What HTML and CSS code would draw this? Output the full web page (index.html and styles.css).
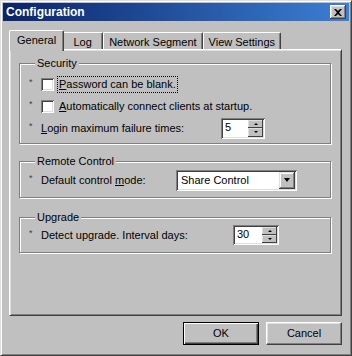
FILE: index.html
```html
<!DOCTYPE html>
<html lang="en">
<head>
<meta charset="UTF-8">
<title>Configuration</title>
<link rel="stylesheet" href="styles.css">
</head>
<body>

<div class="window">
    <div class="titlebar">
        <span class="title">Configuration</span>
        <span class="close-btn">
            <svg width="8" height="7" viewBox="0 0 8 7"><path d="M0 0h2l2 2 2-2h2L5 3.5 8 7H6L4 5 2 7H0l3-3.5z" fill="#000"/></svg>
        </span>
    </div>

    <div class="content">
        <div class="tabs">
            <div class="tab active">General</div>
            <div class="tab tab-log">Log</div>
            <div class="tab">Network Segment</div>
            <div class="tab">View Settings</div>
        </div>

        <div class="panel">
            <div class="group security">
                <div class="group-title">Security</div>
                <div class="row">
                    <span class="star">*</span>
                    <span class="checkbox"></span>
                    <span class="check-label focused"><u>P</u>assword can be blank.</span>
                </div>
                <div class="row">
                    <span class="star">*</span>
                    <span class="checkbox"></span>
                    <span class="check-label"><u>A</u>utomatically connect clients at startup.</span>
                </div>
                <div class="row">
                    <span class="star">*</span>
                    <span class="label label-login"><u>L</u>ogin maximum failure times:</span>
                    <div class="spin spin-login">
                        <span class="spin-value">5</span>
                        <span class="spin-buttons">
                            <span class="spin-btn"><i class="arrow-up"></i></span>
                            <span class="spin-btn"><i class="arrow-down"></i></span>
                        </span>
                    </div>
                </div>
            </div>

            <div class="group remote">
                <div class="group-title">Remote Control</div>
                <div class="row">
                    <span class="star">*</span>
                    <span class="label label-mode">Default control <u>m</u>ode:</span>
                    <div class="combo">
                        <span class="combo-value">Share Control</span>
                        <span class="combo-btn"><i class="arrow-big"></i></span>
                    </div>
                </div>
            </div>

            <div class="group upgrade">
                <div class="group-title">Upgrade</div>
                <div class="row">
                    <span class="star">*</span>
                    <span class="label label-days">Detect upgrade. Interval days:</span>
                    <div class="spin spin-days">
                        <span class="spin-value">30</span>
                        <span class="spin-buttons">
                            <span class="spin-btn"><i class="arrow-up"></i></span>
                            <span class="spin-btn"><i class="arrow-down"></i></span>
                        </span>
                    </div>
                </div>
            </div>
        </div>

        <div class="buttons">
            <div class="btn default">OK</div>
            <div class="btn">Cancel</div>
        </div>
    </div>
</div>

</body>
</html>
```

FILE: styles.css
```css
/* Classic grey dialog */
* {
    box-sizing: border-box;
}
body {
    margin: 0;
    background: #c0c0c0;
    font-family: "Liberation Sans", Arial, sans-serif;
    font-size: 11px;
    line-height: 13px;
    color: #000;
}
.window {
    width: 352px;
    height: 356px;
    display: flex;
    flex-direction: column;
    padding: 2px;
    background: #c0c0c0;
    border: 1px solid;
    border-color: #dfdfdf #404040 #404040 #dfdfdf;
    box-shadow: inset 1px 1px 0 #fff, inset -1px -1px 0 #808080;
}

/* title bar */
.titlebar {
    height: 18px;
    display: flex;
    align-items: center;
    justify-content: space-between;
    padding: 0 3px 0 3px;
    background: linear-gradient(to right, #0a246a, #3c7fd4);
}
.title {
    color: #fff;
    font-weight: bold;
    font-size: 12px;
}
.close-btn {
    width: 16px;
    height: 14px;
    display: flex;
    align-items: center;
    justify-content: center;
    background: #c0c0c0;
    box-shadow: inset -1px -1px 0 #404040, inset 1px 1px 0 #fff,
                inset -2px -2px 0 #808080, inset 2px 2px 0 #dfdfdf;
}

.content {
    flex: 1;
    display: flex;
    flex-direction: column;
    padding: 9px 7px 8px 6px;
}

/* tabs */
.tabs {
    display: flex;
    align-items: flex-start;
    padding-left: 2px;
    height: 19px;
}
.tab {
    margin-top: 2px;
    height: 17px;
    padding: 3px 5px 0 5px;
    min-width: 41px;
    text-align: center;
    border-top: 1px solid #fff;
    border-left: 1px solid #fff;
    border-right: 1px solid #404040;
    border-radius: 2px 2px 0 0;
    box-shadow: inset -1px 0 0 #808080;
    white-space: nowrap;
}
.tab.active {
    position: relative;
    z-index: 1;
    margin: 0 -2px;
    height: 21px;
    padding: 3px 7px 0 7px;
    background: #c0c0c0;
}

.panel {
    flex: 1;
    padding: 13px 10px 0 9px;
    border: 1px solid;
    border-color: #fff #404040 #404040 #fff;
    box-shadow: inset 1px 1px 0 #dfdfdf, inset -1px -1px 0 #808080;
}

/* group boxes */
.group {
    border: 1px solid #808080;
    box-shadow: inset 1px 1px 0 #fff, 1px 1px 0 #fff;
    padding: 0 8px 6px 9px;
}
.group-title {
    width: fit-content;
    margin: -7px 0 0 6px;
    padding: 0 2px;
    background: #c0c0c0;
}
.security {
    padding-bottom: 4px;
}
.security .group-title {
    margin-bottom: 3px;
}
.remote {
    margin-top: 17px;
}
.remote .group-title {
    margin-bottom: 1px;
}
.upgrade {
    margin-top: 19px;
}

.row {
    height: 22px;
    display: flex;
    align-items: center;
}
.star {
    width: 12px;
    font-size: 9px;
    color: #404040;
    margin-top: -3px;
}
.checkbox {
    width: 13px;
    height: 13px;
    background: #fff;
    box-shadow: inset 1px 1px 0 #808080, inset -1px -1px 0 #fff,
                inset 2px 2px 0 #404040, inset -2px -2px 0 #dfdfdf;
}
.check-label {
    margin-left: 4px;
    padding: 1px 1px;
}
.check-label.focused {
    outline: 1px dotted #000;
}
.label-login {
    width: 180px;
}
.label-mode {
    width: 135px;
}
.label-days {
    width: 192px;
}

/* spin boxes and combo */
.spin, .combo {
    display: flex;
    padding: 2px;
    background: #fff;
    box-shadow: inset 1px 1px 0 #808080, inset -1px -1px 0 #fff,
                inset 2px 2px 0 #404040, inset -2px -2px 0 #dfdfdf;
}
.spin-login {
    width: 44px;
    height: 21px;
}
.spin-days {
    width: 46px;
    height: 20px;
}
.spin-value {
    flex: 1;
    padding: 1px 0 0 2px;
}
.spin-buttons {
    width: 15px;
    display: flex;
    flex-direction: column;
}
.spin-btn {
    flex: 1;
    display: flex;
    align-items: center;
    justify-content: center;
    background: #c0c0c0;
    box-shadow: inset -1px -1px 0 #404040, inset 1px 1px 0 #dfdfdf;
}
.arrow-up {
    border-left: 2px solid transparent;
    border-right: 2px solid transparent;
    border-bottom: 2px solid #000;
}
.arrow-down {
    border-left: 2px solid transparent;
    border-right: 2px solid transparent;
    border-top: 2px solid #000;
}
.combo {
    width: 121px;
    height: 21px;
}
.combo-value {
    flex: 1;
    padding: 2px 0 0 3px;
}
.combo-btn {
    width: 16px;
    display: flex;
    align-items: center;
    justify-content: center;
    background: #c0c0c0;
    box-shadow: inset -1px -1px 0 #404040, inset 1px 1px 0 #dfdfdf,
                inset -2px -2px 0 #808080, inset 2px 2px 0 #fff;
}
.arrow-big {
    border-left: 3px solid transparent;
    border-right: 3px solid transparent;
    border-top: 4px solid #000;
}

/* dialog buttons */
.buttons {
    display: flex;
    justify-content: flex-end;
    gap: 7px;
    margin-top: 6px;
}
.btn {
    width: 76px;
    height: 23px;
    display: flex;
    align-items: center;
    justify-content: center;
    border: 1px solid;
    border-color: #fff #404040 #404040 #fff;
    box-shadow: inset -1px -1px 0 #808080, inset 1px 1px 0 #dfdfdf;
}
.btn.default {
    border-color: #000;
    box-shadow: inset 1px 1px 0 #fff, inset -1px -1px 0 #404040,
                inset -2px -2px 0 #808080;
}
```
